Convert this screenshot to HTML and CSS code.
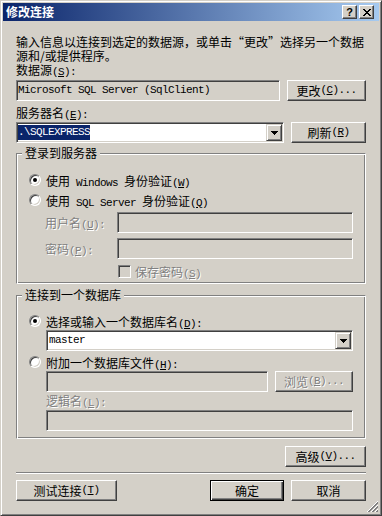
FILE: index.html
```html
<!DOCTYPE html>
<html>
  <head>
    <meta charset="utf-8">
    <title>修改连接</title>
    <link rel="stylesheet" href="styles.css">
  </head>
  <body>
    <div class="window">
      <div class="titlebar">
        <span class="title">修改连接</span>
        <span class="tbtn help">?</span>
        <span class="tbtn close">
          <svg width="8" height="7" viewBox="0 0 8 7" shape-rendering="crispEdges"><path d="M0 0h2v1H0z M6 0h2v1H6z M1 1h2v1H1z M5 1h2v1H5z M2 2h4v1H2z M3 3h2v1H3z M2 4h4v1H2z M1 5h2v1H1z M5 5h2v1H5z M0 6h2v1H0z M6 6h2v1H6z" fill="#000"/></svg>
        </span>
      </div>
      <div class="content">
        <p class="desc">输入信息以连接到选定的数据源，或单击“更改”选择另一个数据<br>源和/或提供程序。</p>
        <div class="lbl">数据源<span class="en">(<u>S</u>):</span></div>
        <div class="row r1">
          <div class="field ro src"><span class="en">Microsoft SQL Server (SqlClient)</span></div>
          <button class="btn w79">更改<span class="en">(<u>C</u>)...</span></button>
        </div>
        <div class="lbl l2">服务器名<span class="en">(<u>E</u>):</span></div>
        <div class="row r2">
          <div class="field combo server">
            <span class="en sel">.\SQLEXPRESS</span>
            <span class="drop"><svg width="7" height="4" viewBox="0 0 7 4" shape-rendering="crispEdges"><path d="M0 0h7v1H0z M1 1h5v1H1z M2 2h3v1H2z M3 3h1v1H3z" fill="#000"/></svg></span>
          </div>
          <button class="btn w75">刷新<span class="en">(<u>R</u>)</span></button>
        </div>

        <fieldset class="group g1">
          <legend>登录到服务器</legend>
          <label class="opt"><span class="radio on"></span><span>使用<span class="en"> Windows </span>身份验证<span class="en">(<u>W</u>)</span></span></label>
          <label class="opt"><span class="radio"></span><span>使用<span class="en"> SQL Server </span>身份验证<span class="en">(<u>Q</u>)</span></span></label>
          <div class="pair">
            <span class="plbl off">用户名<span class="en">(<u>U</u>):</span></span>
            <span class="field dim"></span>
          </div>
          <div class="pair p2">
            <span class="plbl off">密码<span class="en">(<u>P</u>):</span></span>
            <span class="field dim"></span>
          </div>
          <div class="chk">
            <span class="box"></span><span class="off">保存密码<span class="en">(<u>S</u>)</span></span>
          </div>
        </fieldset>

        <fieldset class="group g2">
          <legend>连接到一个数据库</legend>
          <label class="opt short"><span class="radio on"></span><span>选择或输入一个数据库名<span class="en">(<u>D</u>):</span></span></label>
          <div class="field combo indent">
            <span class="en val">master</span>
            <span class="drop"><svg width="7" height="4" viewBox="0 0 7 4" shape-rendering="crispEdges"><path d="M0 0h7v1H0z M1 1h5v1H1z M2 2h3v1H2z M3 3h1v1H3z" fill="#000"/></svg></span>
          </div>
          <label class="opt short o2"><span class="radio"></span><span>附加一个数据库文件<span class="en">(<u>H</u>):</span></span></label>
          <div class="row indent">
            <span class="field dim file"></span>
            <button class="btn w78 off">浏览<span class="en">(<u>B</u>)...</span></button>
          </div>
          <div class="lbl l3 off indent">逻辑名<span class="en">(<u>L</u>):</span></div>
          <div class="field dim indent f3"></div>
        </fieldset>

        <div class="row adv">
          <button class="btn w81">高级<span class="en">(<u>V</u>)...</span></button>
        </div>
        <div class="sep"></div>
        <div class="row actions">
          <button class="btn w101">测试连接<span class="en">(<u>T</u>)</span></button>
          <button class="btn def w74">确定</button>
          <button class="btn w75">取消</button>
        </div>
      </div>
      <svg class="grip" width="12" height="12" viewBox="0 0 12 12">
        <path d="M12 1L1 12 M12 5L5 12 M12 9L9 12" stroke="#fff"/>
        <path d="M12 2L2 12 M12 3L3 12 M12 6L6 12 M12 7L7 12 M12 10L10 12 M12 11L11 12" stroke="#808080"/>
      </svg>
    </div>
  </body>
</html>
```

FILE: styles.css
```css
body {
  margin: 0;
  font-family: "Noto Sans CJK SC", sans-serif;
  font-size: 12px;
  color: #000;
}
.window {
  box-sizing: border-box;
  position: relative;
  width: 382px;
  height: 516px;
  padding: 2px;
  background: #d4d0c8;
  border: 1px solid;
  border-color: #d4d0c8 #404040 #404040 #d4d0c8;
  box-shadow: inset 1px 1px #fff, inset -1px -1px #808080;
}
.titlebar {
  display: flex;
  align-items: center;
  height: 18px;
  padding: 0 5px 0 3px;
  background: linear-gradient(to right, #0a246a, #a6caf0);
}
.title {
  flex: 1;
  color: #fff;
  font-weight: bold;
  line-height: 18px;
}
.tbtn {
  box-sizing: border-box;
  display: flex;
  align-items: center;
  justify-content: center;
  width: 15px;
  height: 14px;
  background: #d4d0c8;
  border: 1px solid;
  border-color: #fff #404040 #404040 #fff;
  box-shadow: inset -1px -1px #808080;
}
.help {
  margin-right: 2px;
  font: bold 11px "Liberation Sans", sans-serif;
  line-height: 12px;
}
.content {
  padding: 0 13px;
}
.en {
  font-family: "Liberation Mono", monospace;
  font-size: 11px;
  line-height: 1;
  letter-spacing: -0.6px;
}
.off {
  color: #808080;
  text-shadow: 1px 1px #fff;
}
.desc {
  margin: 14px 0 0;
  height: 28px;
  line-height: 14px;
  white-space: nowrap;
}
.lbl {
  height: 14px;
  line-height: 14px;
}
.l2 {
  margin-top: 5px;
}
.l3 {
  margin-top: 2px;
}
.row {
  display: flex;
  gap: 7px;
}
.r1 {
  margin-top: 3px;
}
.r2 {
  margin-top: 2px;
}

/* sunken edit box */
.field {
  box-sizing: border-box;
  display: flex;
  align-items: center;
  height: 21px;
  padding: 0 1px;
  background: #fff;
  border: 1px solid;
  border-color: #808080 #fff #fff #808080;
  box-shadow: inset 1px 1px #404040, inset -1px -1px #d4d0c8;
  white-space: nowrap;
}
.ro,
.dim {
  background: #d4d0c8;
}
.src {
  width: 264px;
}
.server {
  width: 268px;
}
.combo {
  padding: 1px;
}
.combo .drop {
  margin-left: auto;
}
.sel {
  line-height: 15px;
  background: #0a246a;
  color: #fff;
}
.val {
  padding-left: 1px;
}
.drop {
  box-sizing: border-box;
  display: flex;
  align-items: center;
  justify-content: center;
  width: 16px;
  height: 17px;
  background: #d4d0c8;
  border: 1px solid;
  border-color: #d4d0c8 #404040 #404040 #d4d0c8;
  box-shadow: inset 1px 1px #fff, inset -1px -1px #808080;
}

/* push buttons */
.btn {
  box-sizing: border-box;
  display: flex;
  align-items: center;
  justify-content: center;
  height: 21px;
  padding: 0;
  font: inherit;
  color: inherit;
  background: #d4d0c8;
  border: 1px solid;
  border-color: #fff #404040 #404040 #fff;
  box-shadow: inset -1px -1px #808080;
  white-space: nowrap;
}
.btn.off {
  color: #808080;
}
.btn.def {
  border-color: #000;
  box-shadow: inset 1px 1px #fff, inset -1px -1px #404040, inset -2px -2px #808080;
}
.w74 { width: 74px; }
.w75 { width: 75px; }
.w78 { width: 78px; }
.w79 { width: 79px; }
.w81 { width: 81px; }
.w101 { width: 101px; }

/* group boxes */
.group {
  min-width: 0;
  margin: 3px 0 0;
  padding: 10px 12px 4px;
  border: 1px solid;
  border-color: #808080 #fff #fff #808080;
  box-shadow: inset 1px 1px #fff, inset -1px -1px #808080;
}
.group legend {
  height: 14px;
  margin-left: -7px;
  padding: 0 3px;
  line-height: 14px;
  background: #d4d0c8;
}
.g2 {
  margin-top: 4px;
  padding-bottom: 7px;
}
.opt {
  display: flex;
  align-items: center;
  gap: 5px;
  height: 20px;
}
.opt.short {
  height: 18px;
}
.o2 {
  margin-top: 2px;
}
.radio {
  box-sizing: border-box;
  position: relative;
  flex: none;
  width: 12px;
  height: 12px;
  border-radius: 50%;
  background: #fff;
  border: 1px solid;
  border-color: #808080 #fff #fff #808080;
  box-shadow: inset 1px 1px #404040, inset -1px -1px #d4d0c8;
}
.radio.on::after {
  content: "";
  position: absolute;
  left: 3px;
  top: 3px;
  width: 4px;
  height: 4px;
  border-radius: 50%;
  background: #000;
}
.pair {
  display: flex;
  align-items: center;
  margin-top: 2px;
  padding-left: 16px;
}
.p2 {
  margin-top: 5px;
}
.plbl {
  flex: none;
  width: 72px;
}
.pair .field {
  flex: 1;
}
.chk {
  display: flex;
  align-items: center;
  gap: 4px;
  height: 16px;
  margin-top: 4px;
  padding-left: 89px;
}
.box {
  box-sizing: border-box;
  width: 13px;
  height: 13px;
  background: #d4d0c8;
  border: 1px solid;
  border-color: #808080 #fff #fff #808080;
  box-shadow: inset 1px 1px #404040, inset -1px -1px #d4d0c8;
}
.indent {
  margin-left: 17px;
}
.file {
  flex: 1;
}
.f3 {
  margin-top: 2px;
}

.adv {
  justify-content: flex-end;
  margin-top: 7px;
}
.sep {
  margin-top: 5px;
  border-top: 1px solid #808080;
  border-bottom: 1px solid #fff;
}
.actions {
  margin-top: 6px;
}
.actions .def {
  margin-left: auto;
}
.grip {
  position: absolute;
  right: 3px;
  bottom: 3px;
}
```
